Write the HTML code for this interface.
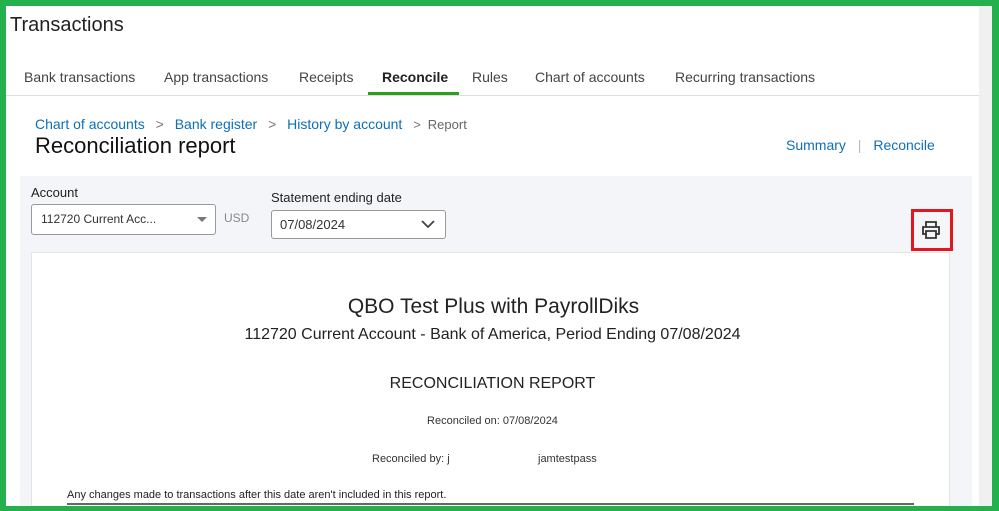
<!DOCTYPE html>
<html><head><style>
*{margin:0;padding:0;box-sizing:border-box}
body{width:999px;height:511px;background:#22b14c;position:relative;overflow:hidden;font-family:"Liberation Sans",sans-serif}
.main{position:absolute;left:6px;top:6px;width:986px;height:500px;background:#fff;overflow:hidden}
.a{position:absolute;white-space:nowrap}
.scroll{position:absolute;left:973px;top:0;width:13px;height:500px;background:#f0f0f0}
</style></head><body>
<div class="main">
<div class="a" style="left:4px;top:8px;font-size:20px;color:#222">Transactions</div>
<div class="a" style="left:18px;top:63px;font-size:14px;color:#444">Bank transactions</div>
<div class="a" style="left:158px;top:63px;font-size:14px;color:#444">App transactions</div>
<div class="a" style="left:293px;top:63px;font-size:14px;color:#444">Receipts</div>
<div class="a" style="left:376px;top:63px;font-size:14px;color:#222;font-weight:bold">Reconcile</div>
<div class="a" style="left:362px;top:86px;width:91px;height:3px;background:#2ca01c"></div>
<div class="a" style="left:466px;top:63px;font-size:14px;color:#444">Rules</div>
<div class="a" style="left:529px;top:63px;font-size:14px;color:#444">Chart of accounts</div>
<div class="a" style="left:669px;top:63px;font-size:14px;color:#444">Recurring transactions</div>
<div class="a" style="left:0;top:89px;width:973px;height:1px;background:#ddd"></div>
<div class="a" style="left:29px;top:110px;font-size:14px;color:#0d6fb8">Chart of accounts <span style="color:#777;margin:0 7px">&gt;</span> Bank register <span style="color:#777;margin:0 7px">&gt;</span> History by account <span style="color:#777;margin:0 7px;font-size:13px">&gt;</span><span style="color:#666;font-size:13px">Report</span></div>
<div class="a" style="left:29px;top:127px;font-size:22px;color:#111">Reconciliation report</div>
<div class="a" style="left:780px;top:131px;font-size:14px;color:#0d6fb8">Summary <span style="color:#bbb;margin:0 8px">|</span> Reconcile</div>
<div class="a" style="left:14px;top:170px;width:952px;height:330px;background:#f4f5f8"></div>
<div class="a" style="left:25px;top:179px;font-size:13px;color:#222">Account</div>
<div class="a" style="left:25px;top:198px;width:185px;height:31px;border:1px solid #999;border-radius:3px;background:#fff;font-size:12px;color:#333;padding:7px 9px">112720 Current Acc...<span style="position:absolute;right:8px;top:12px;border:5px solid transparent;border-top:5px solid #777"></span></div>
<div class="a" style="left:218px;top:205px;font-size:12px;color:#888">USD</div>
<div class="a" style="left:265px;top:184px;font-size:13px;color:#222">Statement ending date</div>
<div class="a" style="left:265px;top:204px;width:175px;height:29px;border:1px solid #999;border-radius:3px;background:#fff;font-size:13px;color:#333;padding:6px 8px">07/08/2024
<svg style="position:absolute;right:10px;top:8px" width="14" height="10" viewBox="0 0 14 10"><path d="M1 2l6 6 6-6" fill="none" stroke="#444" stroke-width="1.8"/></svg></div>
<div class="a" style="left:905px;top:203px;width:42px;height:42px;border:3px solid #e3151e"></div>
<svg class="a" style="left:914px;top:213px" width="22" height="22" viewBox="0 0 22 22"><path d="M6 8V3h10v5M6 15H3V8h16v7h-3M6 12h10v7H6z" fill="none" stroke="#333" stroke-width="1.8"/></svg>
<div class="a" style="left:25px;top:246px;width:919px;height:260px;background:#fff;border:1px solid #e4e4e4"></div>
<div class="a" style="left:0;width:973px;top:289px;text-align:center;font-size:21px;color:#222;padding-left:2px">QBO Test Plus with PayrollDiks</div>
<div class="a" style="left:0;width:973px;top:320px;text-align:center;font-size:16px;color:#222">112720 Current Account - Bank of America, Period Ending 07/08/2024</div>
<div class="a" style="left:0;width:973px;top:369px;text-align:center;font-size:16px;color:#222">RECONCILIATION REPORT</div>
<div class="a" style="left:0;width:973px;top:409px;text-align:center;font-size:11px;color:#333">Reconciled on: 07/08/2024</div>
<div class="a" style="left:366px;top:447px;font-size:11px;color:#333">Reconciled by: j</div>
<div class="a" style="left:532px;top:447px;font-size:11px;color:#333">jamtestpass</div>
<div class="a" style="left:61px;top:483px;font-size:11px;color:#222">Any changes made to transactions after this date aren't included in this report.</div>
<div class="a" style="left:61px;top:497px;width:847px;height:2px;background:#666"></div>
<div class="scroll"></div>
</div>
</body></html>
